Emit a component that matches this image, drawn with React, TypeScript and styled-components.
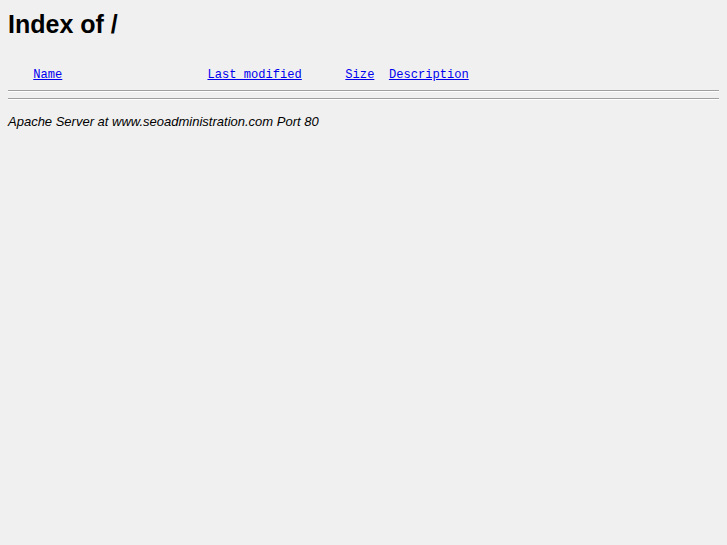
import React from 'react';
import styled, { createGlobalStyle } from 'styled-components';

const Global = createGlobalStyle`
html, body {
  margin: 0;
  background: #f0f0f0;
}
body {
  padding: 8px;
  font-family: "Liberation Sans", Arial, sans-serif;
  font-size: 13px;
  color: #000;
}
`;

const Title = styled.h1`
  font-size: 25px;
  font-weight: bold;
  margin: 0 0 27px;
  line-height: 32px;
`;

const Listing = styled.pre`
  font-family: "Liberation Mono", "Courier New", monospace;
  font-size: 12.1px;
  line-height: 16px;
  margin: 0;
  padding-bottom: 1px;
`;

const Spacer = styled.span`
  display: inline-block;
  width: 18px;
`;

const SortLink = styled.a`
  color: #0000ee;
  text-decoration: underline;
`;

const Rule = styled.hr`
  border: none;
  border-top: 1px solid #a0a0a0;
  border-bottom: 1px solid #ffffff;
  margin: 6px 0;
  height: 0;
`;

const Address = styled.address`
  font-style: italic;
  margin-top: 14px;
`;

export default function App() {
  return (
    <>
      <Global />
      <Title>Index of /</Title>
      <Listing>
        <Spacer /> <SortLink href="?C=N;O=D">Name</SortLink>
        {'                    '}
        <SortLink href="?C=M;O=A">Last modified</SortLink>
        {'      '}
        <SortLink href="?C=S;O=A">Size</SortLink>
        {'  '}
        <SortLink href="?C=D;O=A">Description</SortLink>
      </Listing>
      <Rule />
      <Rule />
      <Address>Apache Server at www.seoadministration.com Port 80</Address>
    </>
  );
}
